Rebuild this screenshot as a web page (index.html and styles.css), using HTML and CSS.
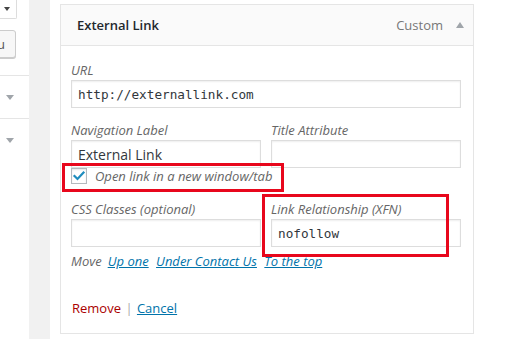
FILE: index.html
```html
<!DOCTYPE html>
<html lang="en">
<head>
<meta charset="utf-8">
<title>Menu item</title>
<link rel="stylesheet" href="styles.css">
</head>
<body>
<div class="page">
  <aside class="side">
    <div class="side-select"><span class="caret caret-dark"></span></div>
    <div class="side-btnwrap"><button class="side-btn" type="button">Menu</button></div>
    <div class="side-sec"><span class="caret"></span></div>
    <div class="side-sec"><span class="caret"></span></div>
  </aside>
  <div class="gutter"></div>
  <main class="main">
    <div class="item">
      <div class="item-head">
        <span class="item-title">External Link</span>
        <span class="item-type">Custom</span>
        <span class="arrow-up"></span>
      </div>
      <div class="item-body">
        <div class="field field-url">
          <label class="lbl">URL</label>
          <input class="input mono" type="text" value="http://externallink.com">
        </div>
        <div class="row2">
          <div class="field">
            <label class="lbl">Navigation Label</label>
            <input class="input" type="text" value="External Link">
          </div>
          <div class="field">
            <label class="lbl">Title Attribute</label>
            <input class="input" type="text" value="">
          </div>
        </div>
        <div class="check-row">
          <span class="check">
            <svg width="14" height="14" viewBox="0 0 14 14"><polyline points="2.5,7 5.5,10 11.5,3.5" fill="none" stroke="#1e8cbe" stroke-width="2.2" stroke-linecap="square"/></svg>
          </span>
          <span class="check-text">Open link in a new window/tab</span>
          <span class="mark mark-check"></span>
        </div>
        <div class="row2 row-css">
          <div class="field">
            <label class="lbl">CSS Classes (optional)</label>
            <input class="input" type="text" value="">
          </div>
          <div class="field field-xfn">
            <label class="lbl">Link Relationship (XFN)</label>
            <input class="input mono" type="text" value="nofollow">
            <span class="mark mark-xfn"></span>
          </div>
        </div>
        <div class="move-row">
          <span>Move</span><a href="#">Up one</a> <a href="#">Under Contact Us</a> <a href="#">To the top</a>
        </div>
        <div class="actions">
          <a class="remove" href="#">Remove</a> <span class="sep">|</span> <a class="cancel" href="#">Cancel</a>
        </div>
      </div>
    </div>
  </main>
</div>
</body>
</html>
```

FILE: styles.css
```css
body {
  margin: 0;
  background: #fff;
  font-family: "Open Sans", "Noto Sans", sans-serif;
  font-size: 13px;
  color: #444;
}

.page {
  display: flex;
  height: 339px;
  overflow: hidden;
}

/* left column */
.side {
  width: 29px;
  flex: none;
  overflow: hidden;
  background: #fff;
}

.side-select {
  width: 17px;
  height: 19px;
  box-sizing: border-box;
  border-right: 1px solid #ddd;
  border-bottom: 1px solid #ddd;
  border-bottom-right-radius: 2px;
  padding: 7px 0 0 4px;
}

.caret {
  display: block;
  width: 0;
  height: 0;
  border-left: 4px solid transparent;
  border-right: 4px solid transparent;
  border-top: 5px solid #a0a5aa;
}

.caret-dark {
  border-left-width: 3px;
  border-right-width: 3px;
  border-top: 4px solid #444;
}

.side-btnwrap {
  display: flex;
  justify-content: flex-end;
  padding-right: 13px;
  margin-top: 11px;
}

.side-btn {
  flex: none;
  height: 28px;
  box-sizing: border-box;
  border: 1px solid #ccc;
  border-radius: 3px;
  background: #f7f7f7;
  box-shadow: 0 1px 0 #ccc;
  padding: 0 10px;
  font-family: "Open Sans", sans-serif;
  font-size: 13px;
  color: #555;
}

.side-sec {
  height: 43px;
  box-sizing: border-box;
  border-top: 1px solid #e5e5e5;
  padding: 19px 0 0 6px;
}

.side-btnwrap + .side-sec {
  margin-top: 17px;
}

.gutter {
  width: 21px;
  flex: none;
  background: #f1f1f1;
}

/* main */
.main {
  flex: 1;
  padding: 4px 0 0 10px;
}

.item {
  width: 414px;
  height: 330px;
  box-sizing: border-box;
  border: 1px solid #e5e5e5;
  background: #fff;
}

.item-head {
  height: 41px;
  box-sizing: border-box;
  border-bottom: 1px solid #e5e5e5;
  background: #fafafa;
  display: flex;
  align-items: center;
  padding: 0 9px 0 16px;
}

.item-title {
  flex: 1;
  font-weight: 600;
  color: #23282d;
}

.item-type {
  color: #777;
  margin-right: 13px;
}

.arrow-up {
  width: 0;
  height: 0;
  border-left: 4px solid transparent;
  border-right: 4px solid transparent;
  border-bottom: 6px solid #a0a5aa;
  margin-top: -1px;
}

.item-body {
  padding: 15px 12px 0 10px;
}

.field {
  position: relative;
}

.lbl {
  display: block;
  line-height: 18px;
  margin-bottom: 1px;
  font-style: italic;
  color: #666;
}

.input {
  display: block;
  width: 100%;
  height: 28px;
  box-sizing: border-box;
  margin: 0;
  border: 1px solid #ddd;
  box-shadow: inset 0 1px 2px rgba(0, 0, 0, 0.07);
  padding: 0 6px;
  font-family: "Open Sans", sans-serif;
  font-size: 14px;
  color: #32373c;
  background: #fff;
  outline: none;
}

.mono {
  font-family: "DejaVu Sans Mono", "Liberation Mono", monospace;
  font-size: 12.7px;
}

.field-url {
  margin-bottom: 13px;
}

.row2 {
  display: grid;
  grid-template-columns: 190px 190px;
  column-gap: 10px;
}

.check-row {
  position: relative;
  display: flex;
  align-items: center;
  height: 16px;
  margin-bottom: 16px;
}

.check {
  width: 16px;
  height: 16px;
  box-sizing: border-box;
  border: 1px solid #b4b9be;
  background: #fff;
  box-shadow: inset 0 1px 2px rgba(0, 0, 0, 0.1);
  display: flex;
  align-items: center;
  justify-content: center;
}

.check svg {
  display: block;
}

.check-text {
  margin-left: 8px;
  font-style: italic;
  color: #666;
  line-height: 18px;
}

.mark {
  position: absolute;
  box-sizing: border-box;
  border: 3px solid #e8071c;
  pointer-events: none;
}

.mark-check {
  left: -9px;
  top: -5px;
  width: 222px;
  height: 29px;
}

.mark-xfn {
  left: -9px;
  top: -6px;
  width: 187px;
  height: 63px;
}

.move-row {
  margin-top: 5px;
  line-height: 18px;
  font-style: italic;
  color: #666;
}

.move-row a {
  margin: 0 2px;
  color: #0073aa;
  text-decoration: underline;
}

.move-row span {
  margin-right: 4px;
}

.actions {
  margin-top: 29px;
  line-height: 18px;
  padding-left: 1px;
}

.remove {
  color: #a00;
  text-decoration: none;
}

.sep {
  color: #aaa;
  margin: 0 1px;
}

.cancel {
  color: #0073aa;
  text-decoration: underline;
}
```
